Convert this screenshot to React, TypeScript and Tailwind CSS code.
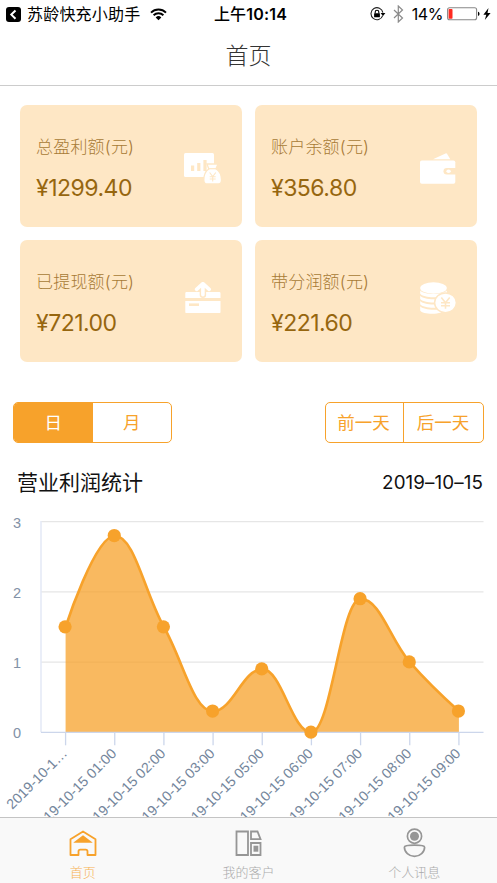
import { useState } from 'react'
import type { ReactNode } from 'react'

const CJK = "font-['Inter','Noto_Sans_CJK_SC',sans-serif]"

type Point = { label: string; value: number }

const points: Point[] = [
  { label: '2019-10-1…', value: 1.5 },
  { label: '2019-10-15 01:00', value: 2.8 },
  { label: '2019-10-15 02:00', value: 1.5 },
  { label: '2019-10-15 03:00', value: 0.3 },
  { label: '2019-10-15 05:00', value: 0.9 },
  { label: '2019-10-15 06:00', value: 0 },
  { label: '2019-10-15 07:00', value: 1.9 },
  { label: '2019-10-15 08:00', value: 1 },
  { label: '2019-10-15 09:00', value: 0.3 },
]

function StatusBar() {
  return (
    <div className="grid h-7 shrink-0 grid-cols-[1fr_auto_1fr] items-center pl-[6px] pr-[6px] text-black">
      <div className="flex items-center">
        <svg width="15" height="15" viewBox="0 0 15 15">
          <rect width="15" height="15" rx="3" />
          <path d="M9.5 3.5 5.3 7.6l4.2 4.1" fill="none" stroke="#fff" strokeWidth="2" />
        </svg>
        <span className="ml-[6px] whitespace-nowrap text-[16px] leading-none tracking-[0.2px]">苏龄快充小助手</span>
        <svg className="ml-[10px]" width="17" height="13" viewBox="0 0 17 13">
          <path d="M1 4.6a10.6 10.6 0 0 1 15 0M3.6 7.3a7 7 0 0 1 9.8 0" fill="none" stroke="#000" strokeWidth="1.9" />
          <path d="M5.7 9.4a4 4 0 0 1 5.6 0L8.5 12.3Z" />
        </svg>
      </div>
      <div className="pl-[4px] text-[16px] font-medium leading-none tracking-[0.2px]">
        上午<span className="font-semibold">10:14</span>
      </div>
      <div className="flex items-center justify-end">
        <svg width="16" height="14" viewBox="0 0 16 14">
          <path d="M12.7 8.6A6 6 0 1 1 12.9 5.6" fill="none" stroke="#222" strokeWidth="1.1" />
          <path d="M10.6 6h4.8L13 9Z" />
          <rect x="4.1" y="6.2" width="5.8" height="4" rx=".5" />
          <path d="M5.2 6.5V5a1.8 1.8 0 0 1 3.6 0v1.5" fill="none" stroke="#000" strokeWidth="1.1" />
        </svg>
        <svg className="ml-[7px]" width="11" height="18" viewBox="0 0 11 18">
          <path d="m1 5 8.5 8L5.3 17V1l4.2 4L1 13" fill="none" stroke="#8b8b8b" strokeWidth="1.2" />
        </svg>
        <span className="ml-[8px] text-[16px] leading-none tracking-[-0.4px]">14%</span>
        <svg className="ml-[4px]" width="33" height="14" viewBox="0 0 33 14">
          <rect x=".6" y=".8" width="29" height="12" rx="2" fill="#fff" stroke="#888" strokeWidth="1.1" />
          <rect x="1.6" y="1.9" width="3.9" height="9.8" rx=".8" fill="#ff2a20" />
          <path d="M31 4.8c2 .6 2 3.6 0 4.2Z" />
        </svg>
        <svg className="ml-[3px]" width="8" height="12" viewBox="0 0 8 12">
          <path d="M5.5 0 .4 6.7h2.9L1.8 12l5.8-7H4.5Z" />
        </svg>
      </div>
    </div>
  )
}

function ChartBagIcon() {
  return (
    <svg className="mt-[5px] -mr-[1px]" width="40" height="32" viewBox="0 0 40 32" fill="#fff">
      <rect x="1" y="0" width="30" height="24" rx="1.5" />
      <path d="M8 12.5h3.2V18H8ZM14.2 10h3.2v8h-3.2ZM20.4 7h3.2v11h-3.2Z" fill="#fee7c5" />
      <path d="M24 11h11l-2 4.8c3 2 5.5 6.6 5.5 11 0 3-1 4.2-3 4.2H24c-2.4 0-3.2-1.4-3.2-4 0-4.4 2-9 5-11Z" stroke="#fee7c5" strokeWidth="1.3" />
      <path d="M25 15.7h9" stroke="#fee7c5" strokeWidth="1.2" />
      <path d="m26.6 19.5 3.1 4 3.1-4M29.7 23.5v5M26.7 23.7h6M26.7 26h6" fill="none" stroke="#fee7c5" strokeWidth="1.1" />
    </svg>
  )
}

function WalletIcon() {
  return (
    <svg className="mt-[5px] mr-[1px]" width="36" height="32" viewBox="0 0 36 32" fill="#fff">
      <path d="M13 6.2 25.5.4q1-.4 1.5.4l3.3 5.4Z" />
      <rect x="0" y="7.4" width="35.3" height="23.4" rx="1.8" />
      <path d="M36 15h-9.2a3.2 3.2 0 0 0 0 6.6H36Z" fill="#fee7c5" />
      <ellipse cx="28.6" cy="18.2" rx="2.2" ry="1.8" />
    </svg>
  )
}

function WithdrawIcon() {
  return (
    <svg className="mb-[6px] mr-[1px]" width="36" height="32" viewBox="0 0 36 32" fill="#fff">
      <path d="M1.5 10h32.8q1.2 0 1.2 1.2V16H.3v-4.8q0-1.2 1.2-1.2ZM.3 18.9h35.2v11q0 1.2-1.2 1.2H1.5Q.3 31.1.3 29.9Z" />
      <path d="M4 21.4h10V24H4Z" fill="#fee7c5" />
      <path d="M17.9 4v8.8" stroke="#fee7c5" strokeWidth="6.5" strokeLinecap="round" />
      <path d="M17.9 2.2v10.6M11.6 7.3l6.3-5.6 6.3 5.6" fill="none" stroke="#fff" strokeWidth="3.6" strokeLinecap="round" strokeLinejoin="round" />
    </svg>
  )
}

function CoinsIcon() {
  return (
    <svg className="mb-[5px]" width="37" height="33" viewBox="0 0 37 33" fill="#fff">
      <ellipse cx="13.5" cy="6" rx="13.3" ry="5.8" />
      <path d="M.2 8.6c3 4.6 23.6 4.6 26.6 0v3.2c-3 4.6-23.6 4.6-26.6 0ZM.2 13.8c3 4.6 23.6 4.6 26.6 0V17c-3 4.6-23.6 4.6-26.6 0ZM.2 19c3 4.6 23.6 4.6 26.6 0v3.2c-3 4.6-23.6 4.6-26.6 0ZM.2 24.2c2 3 14 4.6 20 2.8l1 3.5C13 33 2 31.5.2 28.4Z" />
      <ellipse cx="25.5" cy="20.8" rx="10.9" ry="9.9" stroke="#fee7c5" strokeWidth="1.5" />
      <path d="m21.3 15.5 4.2 5.2 4.2-5.2M25.5 20.7v6M21 20.7h9M21 23.7h9" fill="none" stroke="#fee7c5" strokeWidth="1.6" />
    </svg>
  )
}

function StatCard({ title, amount, children }: { title: string; amount: string; children: ReactNode }) {
  return (
    <div className="flex h-[122px] items-center justify-between rounded-[7px] bg-[#fee7c5] pl-[16px] pr-[20px]">
      <div className="flex flex-col gap-[10px] pt-[5px]">
        <div className="text-[17px] font-light leading-[28px] tracking-[0.2px] text-[#a77a35]">{title}</div>
        <div className="font-['Inter',sans-serif] text-[23px] font-normal leading-[34px] tracking-[-0.5px] text-[#96660f]">{amount}</div>
      </div>
      {children}
    </div>
  )
}

// chart coordinates, local to the 497x300 svg
const LEFT = 41
const RIGHT = 483.5
const BASE = 215.3
const UNIT = 70.2
const STEP = (RIGHT - LEFT) / points.length

const coords = points.map((p, i) => ({ x: LEFT + STEP * (i + 0.5), y: BASE - p.value * UNIT }))

function splinePath(pts: { x: number; y: number }[]) {
  let d = `M${pts[0].x} ${pts[0].y}`
  let prev = pts[0]
  for (let i = 1; i < pts.length; i++) {
    const p = pts[i]
    let left = p
    let right = p
    if (i < pts.length - 1) {
      const a = pts[i - 1]
      const b = pts[i + 1]
      const lx = (1.5 * p.x + a.x) / 2.5
      let ly = (1.5 * p.y + a.y) / 2.5
      const rx = (1.5 * p.x + b.x) / 2.5
      let ry = (1.5 * p.y + b.y) / 2.5
      const fix = ((ry - ly) * (rx - p.x)) / (rx - lx) + p.y - ry
      ly += fix
      ry += fix
      // keep control points between neighbours so the curve never overshoots
      if (ly > Math.max(a.y, p.y) || ly < Math.min(a.y, p.y)) {
        ly = ly > p.y ? Math.max(a.y, p.y) : Math.min(a.y, p.y)
        ry = 2 * p.y - ly
      }
      if (ry > Math.max(b.y, p.y) || ry < Math.min(b.y, p.y)) {
        ry = ry > p.y ? Math.max(b.y, p.y) : Math.min(b.y, p.y)
        ly = 2 * p.y - ry
      }
      left = { x: lx, y: ly }
      right = { x: rx, y: ry }
    }
    d += `C${prev.x} ${prev.y} ${left.x} ${left.y} ${p.x} ${p.y}`
    prev = right
  }
  return d
}

function ProfitChart() {
  const line = splinePath(coords)
  return (
    <svg className="block shrink-0 overflow-visible font-['Liberation_Sans',Arial,sans-serif]" width="497" height="300" viewBox="0 0 497 300">
      {[0, 1, 2, 3].map((v) => (
        <g key={v}>
          {v > 0 && <path d={`M${LEFT} ${BASE - v * UNIT}H${RIGHT}`} stroke="#e6e6e6" strokeWidth="1.3" />}
          <text x="13" y={BASE - v * UNIT + 6} fontSize="14.5" fill="#8291a6">{v}</text>
        </g>
      ))}
      <path d={`M${LEFT} 4V${BASE}`} stroke="#e3e9f6" strokeWidth="1.5" />
      <path d={`${line}V${BASE}H${coords[0].x}Z`} fill="#f7a22b" fillOpacity="0.75" />
      <path d={`M${LEFT} ${BASE}H${RIGHT}`} stroke="#ccd6eb" strokeWidth="1.2" />
      <path d={line} fill="none" stroke="#f7a22b" strokeWidth="2.6" strokeLinejoin="round" />
      {coords.map((c, i) => (
        <g key={points[i].label}>
          <path d={`M${c.x} ${BASE}v13`} stroke="#ccd6eb" strokeWidth="1.3" />
          <circle cx={c.x - 0.5} cy={c.y - 0.2} r="6.6" fill="#f7a22b" />
          <text
            transform={`translate(${c.x + 2.5} ${BASE + 22}) rotate(-45)`}
            textAnchor="end"
            fontSize="14.2"
            fill="#74869c"
          >
            {points[i].label}
          </text>
        </g>
      ))}
    </svg>
  )
}

function TabBar() {
  return (
    <div className="grid h-[66px] shrink-0 grid-cols-3 border-t border-[#c4c4c4] bg-[#f9f9f9] text-[13px] font-light leading-[20px]">
      <div className="flex flex-col items-center pt-[12px] text-[#f7a22b]">
        <svg width="28" height="27" viewBox="0 0 28 27">
          <path d="M1.5 9.3 14 1.5l12.5 7.8V25h-8v-3.5q0-1.8-1.8-1.8h-5.4q-1.800 0-1.800 1.800V25h-8Z" fill="none" stroke="currentColor" strokeWidth="1.8" strokeLinejoin="round" />
          <path d="M4.5 12.500 14 5.200l9.500 7.300v.3h-19Z" fill="currentColor" />
        </svg>
        <span className="mt-[5px] opacity-80">首页</span>
      </div>
      <div className="flex flex-col items-center pt-[12px] text-[#969696]">
        <svg width="27" height="27" viewBox="0 0 27 27" fill="none" stroke="currentColor" strokeWidth="1.8">
          <path d="M1.5 1.5H13V25H1.5ZM16 1.5h6.500l3 7.700H16ZM16 13h9.500v12H16Z" />
          <path d="M18.5 15.7h4.8v6h-4.8Z" fill="currentColor" stroke="none" />
        </svg>
        <span className="mt-[5px] opacity-80">我的客户</span>
      </div>
      <div className="flex flex-col items-center pt-[10px] text-[#969696]">
        <svg width="23" height="30" viewBox="0 0 23 30" fill="none" stroke="currentColor" strokeWidth="1.7">
          <circle cx="11.5" cy="8.2" r="7.1" />
          <circle cx="11.5" cy="8.2" r="4.5" fill="currentColor" stroke="none" />
          <path d="M1.4 19.2q0-2 10.1-2t10.1 2c0 5-4.6 9.2-10.1 9.2S1.4 24.2 1.4 19.2Z" />
        </svg>
        <span className="mt-[4px] opacity-80">个人讯息</span>
      </div>
    </div>
  )
}

export default function App() {
  const [range, setRange] = useState<'day' | 'month'>('day')

  return (
    <div className={`flex h-[883px] w-[497px] flex-col overflow-hidden bg-white ${CJK}`}>
      <StatusBar />
      <h1 className="flex h-[58px] shrink-0 items-center justify-center border-b border-[#cccccc] text-[23px] font-light text-[#333]">首页</h1>

      <div className="grid shrink-0 grid-cols-2 gap-x-[13px] gap-y-[13px] px-[20px] pt-[19px]">
        <StatCard title="总盈利额(元)" amount="¥1299.40"><ChartBagIcon /></StatCard>
        <StatCard title="账户余额(元)" amount="¥356.80"><WalletIcon /></StatCard>
        <StatCard title="已提现额(元)" amount="¥721.00"><WithdrawIcon /></StatCard>
        <StatCard title="带分润额(元)" amount="¥221.60"><CoinsIcon /></StatCard>
      </div>

      <div className="mt-[40px] flex shrink-0 justify-between px-[13px] text-[17.5px] text-[#f7a22b]">
        <div className="flex h-[41px] w-[159px] overflow-hidden rounded-[5px] border border-[#f7a22b]">
          {(['day', 'month'] as const).map((key) => (
            <button
              key={key}
              type="button"
              onClick={() => setRange(key)}
              className={range === key ? 'flex-1 bg-[#f7a22b] pt-[2px] text-white' : 'flex-1 pt-[2px]'}
            >
              {key === 'day' ? '日' : '月'}
            </button>
          ))}
        </div>
        <div className="flex h-[41px] w-[159px] overflow-hidden rounded-[5px] border border-[#f7a22b]">
          <button type="button" className="w-[78px] border-r border-[#f7a22b] pr-[2px] pt-[2px]">前一天</button>
          <button type="button" className="flex-1 pr-[1px] pt-[2px]">后一天</button>
        </div>
      </div>

      <div className="flex h-[74px] shrink-0 items-center justify-between pl-[17px] pr-[14px] pt-[5px] text-[#111]">
        <h2 className="text-[21px] leading-[30px]">营业利润统计</h2>
        <span className="text-[18.8px] leading-[30px] tracking-[0.1px]">2019–10–15</span>
      </div>

      <ProfitChart />
      <TabBar />
    </div>
  )
}
